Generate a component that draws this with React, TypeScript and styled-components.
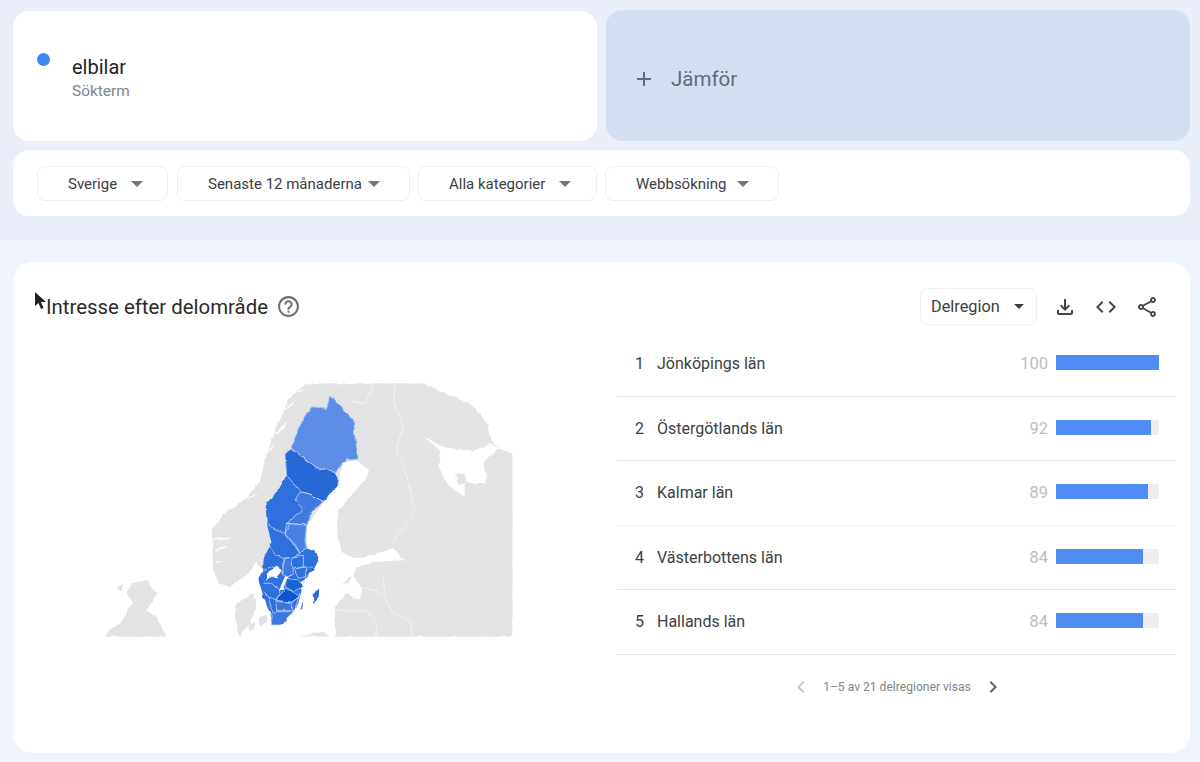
import React from 'react'
import styled, { createGlobalStyle } from 'styled-components'
import {
  MdAdd, MdChevronLeft, MdChevronRight, MdCode, MdHelpOutline,
  MdOutlineFileDownload, MdOutlineShare,
} from 'react-icons/md'

const Global = createGlobalStyle`
  html, body { margin: 0; padding: 0; }
  body {
    width: 1200px;
    height: 762px;
    overflow: hidden;
    background: #f0f4fc;
    font-family: Roboto, "Liberation Sans", sans-serif;
  }
`

// ── Top area ───────────────────────────────────────────────────────

const TopArea = styled.section`
  height: 240px;
  box-sizing: border-box;
  padding: 10px 10px 0 13px;
  background: #e9eef8;
  display: flex;
  flex-direction: column;
  gap: 9px;
`

const TermRow = styled.div`
  display: grid;
  grid-template-columns: 584px 584px;
  gap: 9px;
  height: 131px;
`

const TermCard = styled.div`
  margin-top: 1px;
  border-radius: 16px;
  background: #fff;
  display: flex;
  align-items: flex-start;
  padding: 42px 0 0 24px;
`

const Dot = styled.span`
  width: 13px;
  height: 13px;
  border-radius: 50%;
  background: #4285f4;
  flex: none;
`

const TermText = styled.div`
  margin-left: 22px;
  margin-top: 1px;
`

const TermName = styled.div`
  font-size: 20px;
  line-height: 26px;
  color: #1f1f1f;
`

const TermKind = styled.div`
  margin-top: 1px;
  font-size: 15.4px;
  line-height: 20px;
  color: #80868b;
`

const CompareCard = styled.div`
  border-radius: 16px;
  background: #d3dff1;
  display: flex;
  align-items: center;
  gap: 15px;
  padding: 6px 0 0 26px;
  font-size: 20.5px;
  color: #5f6b7a;
  svg { font-size: 24px; }
`

const FilterBar = styled.div`
  height: 66px;
  box-sizing: border-box;
  width: 1177px;
  border-radius: 16px;
  background: #fff;
  display: flex;
  align-items: center;
  padding: 0 24px;
`

const Chip = styled.div<{ $gap: number; $width: number; $after: number }>`
  width: ${p => p.$width}px;
  height: 35px;
  margin-right: ${p => p.$after}px;
  box-sizing: border-box;
  border: 1px solid #edf0f3;
  border-radius: 8px;
  display: flex;
  align-items: center;
  gap: ${p => p.$gap}px;
  padding: 1px 0 0 30px;
  font-size: 15px;
  color: #3c4043;
  white-space: nowrap;
`

const Caret = styled.span<{ $size?: number; $color?: string }>`
  width: 0;
  height: 0;
  flex: none;
  border-left: ${p => p.$size ?? 6}px solid transparent;
  border-right: ${p => p.$size ?? 6}px solid transparent;
  border-top: ${p => p.$size ?? 6}px solid ${p => p.$color ?? '#757575'};
`

// ── Main card ──────────────────────────────────────────────────────

const MainArea = styled.main`
  padding: 22px 10px 0 13px;
`

const Card = styled.div`
  position: relative;
  width: 1177px;
  height: 491px;
  border-radius: 20px;
  background: #fff;
`

const Pointer = styled.svg`
  position: absolute;
  left: 21px;
  top: 29px;
`

const Header = styled.header`
  display: flex;
  align-items: center;
  height: 37px;
  padding: 26px 31px 0 33px;
`

const Title = styled.h2`
  margin: 0;
  font-size: 20.4px;
  font-weight: 400;
  color: #2b2b2b;
`

const HelpIcon = styled.span`
  display: flex;
  margin-left: 8px;
  font-size: 25px;
  color: #6e6e6e;
`

const Actions = styled.div`
  margin-left: auto;
  display: flex;
  align-items: center;
  gap: 17px;
`

const RegionSelect = styled.div`
  width: 117px;
  height: 37px;
  box-sizing: border-box;
  border: 1px solid #edf0f3;
  border-radius: 8px;
  display: flex;
  align-items: center;
  justify-content: space-between;
  padding: 0 12px 0 10px;
  margin-right: -1px;
  font-size: 16.3px;
  color: #3c4043;
`

const IconButton = styled.span`
  display: flex;
  width: 24px;
  height: 24px;
  font-size: 24px;
  color: #444746;
`

const Body = styled.div`
  display: grid;
  grid-template-columns: 604px 559px;
  margin-top: 7px;
`

const MapSvg = styled.svg`
  display: block;
  margin: 38px 0 0 77px;
  filter: blur(0.35px);
`

const Row = styled.div<{ $faint?: boolean }>`
  height: 64.5px;
  box-sizing: border-box;
  display: flex;
  align-items: center;
  padding: 0 17px 0 18px;
  border-bottom: 1px solid ${p => (p.$faint ? '#f1f2f3' : '#e3e5e8')};
`

const Rank = styled.span`
  width: 22px;
  font-size: 16px;
  color: #3c4043;
`

const RegionName = styled.span`
  flex: 1;
  font-size: 16px;
  color: #3c4043;
`

const Score = styled.span`
  margin-right: 8px;
  font-size: 16.5px;
  color: #bdbdbd;
`

const Track = styled.div`
  width: 103px;
  height: 15px;
  margin-bottom: 2px;
  background: #eeeeee;
`

const Fill = styled.div`
  height: 100%;
  background: #4f8df5;
`

const Pager = styled.div`
  height: 64px;
  display: flex;
  align-items: center;
  justify-content: center;
  gap: 10px;
  font-size: 12.1px;
  color: #80868b;
  margin-left: 1px;
`

const PagerArrow = styled.span<{ $off?: boolean }>`
  display: flex;
  font-size: 24px;
  color: ${p => (p.$off ? '#c4c7c9' : '#5f6368')};
`

// ── Map ────────────────────────────────────────────────────────────

const land = [
  'M650 40 L1000 40 1060 70 1140 100 1195 165 1205 215 1225 235 1268 250 1268 800 735 800 735 710 770 672 810 690 815 650 790 620 800 590 860 575 945 570 910 535 880 545 790 565 755 545 740 470 745 420 790 370 830 325 835 300 800 270 760 280 745 340 700 395 650 470 650 530 680 560 640 640 520 600 500 580 470 615 420 650 385 640 370 600 365 480 400 430 470 385 510 330 530 250 565 160 600 80Z',
  'M440 700 490 670 500 720 470 770 450 800 435 740Z',
  'M505 745 530 730 535 755 510 770Z',
  'M475 760 495 755 495 780 478 782Z',
  'M45 800 60 775 95 760 110 720 130 700 110 670 125 640 170 630 200 670 170 720 205 745 225 800Z',
  'M625 800 700 785 720 800Z',
  'M80 655 100 640 95 665Z',
  'M755 640 785 620 780 640Z',
]

const whiteSea = 'M995 195 1060 232 1150 242 1198 222 1225 235 1180 275 1190 340 1130 338 1120 378 1075 345 1045 290 1050 240Z'

const fjords = [
  'M365 510 420 505', 'M375 540 405 530', 'M400 430 440 405', 'M470 385 500 375',
  'M520 300 490 320', 'M555 190 590 160', 'M570 130 610 100', 'M610 70 640 60',
  'M525 250 555 225', 'M380 580 400 575',
]

const landBorders = [
  'M915 50 910 100 940 170 920 230 945 300 975 420 900 530',
  'M780 90 830 100 850 40',
  'M735 720 830 720 860 760 860 800',
  'M880 620 885 680 910 730 960 750 970 800',
  'M810 650 880 670',
]

const sweden = 'M722 78 760 115 790 145 795 200 805 268 770 270 735 305 745 345 700 395 665 425 650 470 645 510 650 535 675 545 685 572 670 600 660 610 650 625 625 640 635 660 625 700 612 725 590 745 580 765 548 765 540 725 520 680 505 625 520 600 520 570 545 520 530 460 527 400 565 360 590 315 585 255 605 237 625 175 665 110 710 115Z'

const regions: { d: string; fill: string }[] = [
  { fill: '#5b8de6', d: 'M722 78 760 115 790 145 795 200 805 268 770 270 735 305 705 298 680 292 605 237 625 175 665 110 710 115Z' },
  { fill: '#2867d6', d: 'M585 255 605 237 680 292 705 298 735 305 745 345 700 395 660 372 630 365 590 315Z' },
  { fill: '#4079e0', d: 'M630 365 660 372 700 395 665 425 650 465 590 460 640 420 615 390Z' },
  { fill: '#4a80e2', d: 'M590 460 650 465 645 510 650 535 630 550 585 490Z' },
  { fill: '#1f62d8', d: 'M590 625 625 630 640 650 610 665 585 650Z' },
  { fill: '#0b57d0', d: 'M585 655 610 665 628 680 605 697 555 690Z' },
  { fill: '#4079e0', d: 'M580 565 605 562 610 612 590 620 578 610Z' },
  { fill: '#3b76df', d: 'M558 695 605 697 605 722 560 722Z' },
  { fill: '#3d78e0', d: 'M545 725 610 725 590 745 580 765 548 765Z' },
]

const swedenBorders = [
  'M530 460 555 480 585 490 600 460 590 460',
  'M585 490 620 530 630 550 650 535',
  'M535 515 555 555 580 565 605 562 630 550',
  'M605 562 640 555 640 590 612 597',
  'M640 590 665 592',
  'M612 597 650 590 650 620 625 625 612 597',
  'M580 565 578 610 545 590 520 600',
  'M520 640 545 640 570 660 560 690 535 680 522 665',
  'M535 682 545 722',
  'M630 670 612 725',
  'M628 680 605 697',
  'M590 620 610 612',
]

const lakes = [
  'M530 632 535 605 560 590 575 600 560 625 545 620Z',
  'M568 660 585 618 592 622 578 660Z',
]

const islands = [
  { d: 'M668 670 688 656 686 680 670 698Z', fill: '#2b69d8' },
  { d: 'M630 722 641 688 637 715Z', fill: '#3a75de' },
]

function SwedenMap() {
  return (
    <MapSvg width="440" height="280" viewBox="0 0 1320 840">
      <defs>
        <filter id="coast" x="0" y="0" width="100%" height="100%" filterUnits="userSpaceOnUse" primitiveUnits="userSpaceOnUse">
          <feTurbulence type="fractalNoise" baseFrequency="0.035" numOctaves="3" seed="4" result="n" />
          <feDisplacementMap in="SourceGraphic" in2="n" scale="11" xChannelSelector="R" yChannelSelector="G" />
        </filter>
        <clipPath id="frame"><rect x="0" y="40" width="1268" height="760" /></clipPath>
      </defs>
      <g clipPath="url(#frame)">
        <g filter="url(#coast)">
          {land.map(d => <path key={d} d={d} fill="#e3e3e3" />)}
          <path d={whiteSea} fill="#fff" />
          <path d="M1095 315 1125 308 1130 340 1105 345Z" fill="#e3e3e3" />
          {fjords.map(d => <path key={d} d={d} fill="none" stroke="#fff" strokeWidth="4" />)}
          {landBorders.map(d => <path key={d} d={d} fill="none" stroke="#f3f3f3" strokeWidth="3" />)}
          <path d={sweden} fill="#2f6fdc" />
          {regions.map(r => <path key={r.d} d={r.d} fill={r.fill} />)}
          {regions.map(r => <path key={r.d} d={r.d} fill="none" stroke="#b9d0f6" strokeWidth="2.5" />)}
          {swedenBorders.map(d => <path key={d} d={d} fill="none" stroke="#b9d0f6" strokeWidth="2.5" />)}
          {lakes.map(d => <path key={d} d={d} fill="#fff" />)}
          {islands.map(i => <path key={i.d} d={i.d} fill={i.fill} />)}
        </g>
      </g>
    </MapSvg>
  )
}

// ── Page ───────────────────────────────────────────────────────────

const filters = [
  { label: 'Sverige', gap: 14, width: 131, after: 9 },
  { label: 'Senaste 12 månaderna', gap: 6, width: 233, after: 8 },
  { label: 'Alla kategorier', gap: 14, width: 179, after: 8 },
  { label: 'Webbsökning', gap: 11, width: 174, after: 0 },
]

const rows = [
  { name: 'Jönköpings län', score: 100 },
  { name: 'Östergötlands län', score: 92 },
  { name: 'Kalmar län', score: 89 },
  { name: 'Västerbottens län', score: 84 },
  { name: 'Hallands län', score: 84 },
]

export default function App() {
  return (
    <>
      <Global />
      <TopArea>
        <TermRow>
          <TermCard>
            <Dot />
            <TermText>
              <TermName>elbilar</TermName>
              <TermKind>Sökterm</TermKind>
            </TermText>
          </TermCard>
          <CompareCard>
            <MdAdd />
            <span>Jämför</span>
          </CompareCard>
        </TermRow>
        <FilterBar>
          {filters.map(f => (
            <Chip key={f.label} $gap={f.gap} $width={f.width} $after={f.after}>
              {f.label}
              <Caret />
            </Chip>
          ))}
        </FilterBar>
      </TopArea>
      <MainArea>
        <Card>
          <Pointer width="14" height="20" viewBox="0 0 14 20">
            <path d="M1 1 L1 15 L4.5 12 L7 18 L9.5 17 L7 11 L12 11Z" fill="#222" />
          </Pointer>
          <Header>
            <Title>Intresse efter delområde</Title>
            <HelpIcon><MdHelpOutline /></HelpIcon>
            <Actions>
              <RegionSelect>
                Delregion
                <Caret $size={5} $color="#3c4043" />
              </RegionSelect>
              <IconButton><MdOutlineFileDownload /></IconButton>
              <IconButton><MdCode /></IconButton>
              <IconButton><MdOutlineShare /></IconButton>
            </Actions>
          </Header>
          <Body>
            <SwedenMap />
            <div>
              {rows.map((r, i) => (
                <Row key={r.name} $faint={i === 2}>
                  <Rank>{i + 1}</Rank>
                  <RegionName>{r.name}</RegionName>
                  <Score>{r.score}</Score>
                  <Track>
                    <Fill style={{ width: `${r.score}%` }} />
                  </Track>
                </Row>
              ))}
              <Pager>
                <PagerArrow $off><MdChevronLeft /></PagerArrow>
                <span>1–5 av 21 delregioner visas</span>
                <PagerArrow><MdChevronRight /></PagerArrow>
              </Pager>
            </div>
          </Body>
        </Card>
      </MainArea>
    </>
  )
}
